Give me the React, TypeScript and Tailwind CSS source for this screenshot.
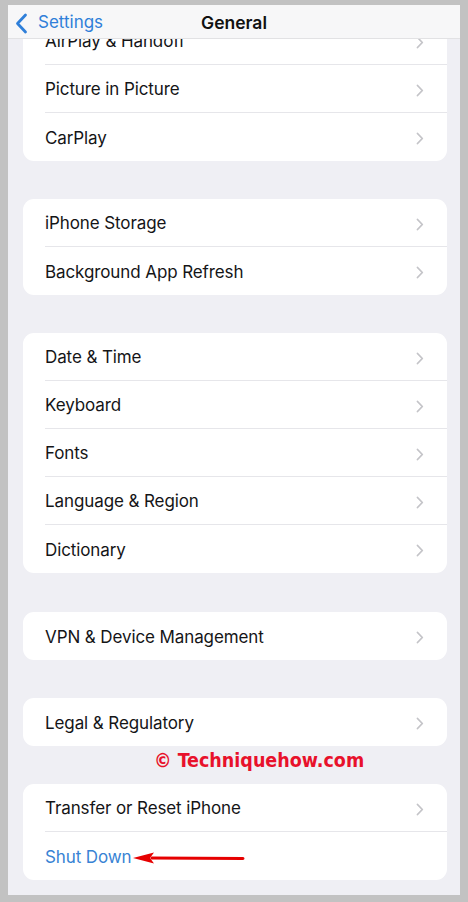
import React from "react";

const Chevron = () => (
  <svg width="8" height="13" viewBox="0 0 8 13" fill="none" className="shrink-0">
    <path d="M1.5 1.5L6.3 6.5L1.5 11.5" stroke="#c4c4c8" strokeWidth="1.8" strokeLinecap="round" strokeLinejoin="round" />
  </svg>
);

type RowProps = { label: string; last?: boolean; blue?: boolean; chevron?: boolean };

const Row = ({ label, last, blue, chevron = true }: RowProps) => (
  <div className="h-[48px] pl-[22px] flex">
    <div
      className={`flex-1 flex items-center justify-between pr-[23px] pt-[3px] ${
        last ? "" : "border-b border-[#e6e6ea]"
      }`}
    >
      <span className={`text-[17px] tracking-[-0.1px] ${blue ? "text-[#3883d4]" : "text-[#151517]"}`}>{label}</span>
      {chevron && <Chevron />}
    </div>
  </div>
);

const Card = ({ children, className = "" }: { children: React.ReactNode; className?: string }) => (
  <div className={`bg-white rounded-[11px] overflow-hidden ${className}`}>{children}</div>
);

export default function App() {
  return (
    <div
      className="h-[902px] w-[468px] bg-[#c2c2c2] pt-[5px] px-[8px] pb-[7px]"
      style={{ fontFamily: "Inter, 'Noto Sans', sans-serif" }}
    >
      <div className="relative h-full overflow-hidden bg-[#efeff4]">
        <div className="absolute top-0 inset-x-0 h-[34px] pt-[3px] bg-[#f7f7f8] border-b border-[#e2e2e4] z-10 flex items-center">
          <div className="flex items-center pl-[7px]">
            <svg width="13" height="21" viewBox="0 0 13 21" fill="none">
              <path d="M10.5 2L2.5 10.5L10.5 19" stroke="#2f7fd9" strokeWidth="2.8" strokeLinecap="round" strokeLinejoin="round" />
            </svg>
            <span className="ml-[10px] text-[17px] text-[#2f7fd9]">Settings</span>
          </div>
          <span className="absolute left-1/2 -translate-x-1/2 text-[17.5px] font-semibold text-[#111]">General</span>
        </div>

        <div className="flex flex-col pt-[12px] pl-[15px] pr-[13px]">
          <Card>
            <Row label="AirPlay & Handoff" />
            <Row label="Picture in Picture" />
            <Row label="CarPlay" last />
          </Card>
          <Card className="mt-[38px]">
            <Row label="iPhone Storage" />
            <Row label="Background App Refresh" last />
          </Card>
          <Card className="mt-[38px]">
            <Row label="Date & Time" />
            <Row label="Keyboard" />
            <Row label="Fonts" />
            <Row label="Language & Region" />
            <Row label="Dictionary" last />
          </Card>
          <Card className="mt-[39px]">
            <Row label="VPN & Device Management" last />
          </Card>
          <Card className="mt-[38px]">
            <Row label="Legal & Regulatory" last />
          </Card>
          <Card className="mt-[38px]">
            <Row label="Transfer or Reset iPhone" />
            <Row label="Shut Down" last blue chevron={false} />
          </Card>
        </div>

        <div
          className="absolute left-[146px] top-[744px] text-[19.5px] font-bold leading-[24px] text-[#e8112b]"
          style={{ fontFamily: "'DejaVu Sans Condensed', 'DejaVu Sans', sans-serif", fontStretch: "condensed" }}
        >
          © Techniquehow.com
        </div>

        <svg className="absolute left-[124px] top-[845px]" width="114" height="16" viewBox="0 0 114 16">
          <path d="M20 8 L111 8.6" stroke="#e60000" strokeWidth="3" strokeLinecap="round" />
          <path d="M1 8 L22 2.5 L18 8 L22 13.5 Z" fill="#e60000" />
        </svg>
      </div>
    </div>
  );
}
